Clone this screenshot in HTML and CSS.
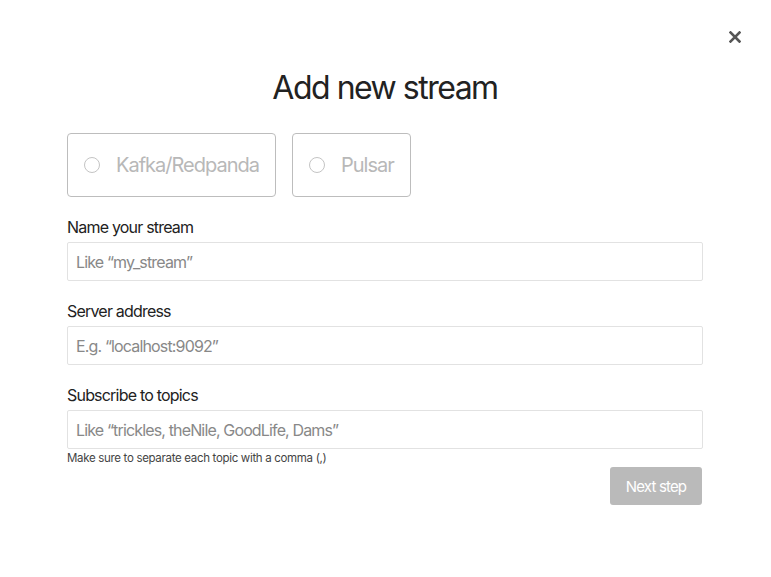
FILE: index.html
```html
<!DOCTYPE html>
<html>
<head>
<meta charset="utf-8">
<link rel="stylesheet" href="styles.css">
</head>
<body>
<div class="modal">
  <button class="close" aria-label="Close">
    <svg width="12" height="12" viewBox="0 0 12 12"><path d="M1.5 1.5 L10.5 10.5 M10.5 1.5 L1.5 10.5" stroke="#555" stroke-width="2.6" stroke-linecap="square"/></svg>
  </button>
  <h1 class="title">Add new stream</h1>
  <div class="types">
    <label class="type"><span class="radio"></span><span class="type-name">Kafka/Redpanda</span></label>
    <label class="type"><span class="radio"></span><span class="type-name">Pulsar</span></label>
  </div>
  <div class="field">
    <div class="label">Name your stream</div>
    <div class="input">Like “my_stream”</div>
  </div>
  <div class="field">
    <div class="label">Server address</div>
    <div class="input">E.g. “localhost:9092”</div>
  </div>
  <div class="field">
    <div class="label">Subscribe to topics</div>
    <div class="input">Like “trickles, theNile, GoodLife, Dams”</div>
    <div class="help">Make sure to separate each topic with a comma (,)</div>
  </div>
  <div class="actions">
    <button class="next">Next step</button>
  </div>
</div>
</body>
</html>
```
FILE: styles.css
```css
html, body {
  margin: 0;
  padding: 0;
  background: #fff;
  font-family: Inter, "Noto Sans", sans-serif;
  color: #222;
}
.modal {
  position: relative;
  width: 636px;
  padding: 66px 68px 0 67px;
}
.close {
  position: absolute;
  top: 31px;
  right: 30px;
  width: 12px;
  height: 12px;
  padding: 0;
  border: 0;
  background: none;
  display: flex;
}
.title {
  margin: 0;
  text-align: center;
  font-size: 32px;
  font-weight: 400;
  line-height: 44px;
  color: #222;
  letter-spacing: -1.5px;
}
.types {
  display: flex;
  gap: 16px;
  margin-top: 23px;
}
.type {
  display: flex;
  align-items: center;
  height: 62px;
  padding: 0 16px 0 16px;
  border: 1px solid #bdbdbd;
  border-radius: 4px;
}
.radio {
  width: 14px;
  height: 14px;
  border: 1px solid #c4c4c4;
  border-radius: 50%;
  margin-right: 16px;
}
.type-name {
  font-size: 20px;
  color: #b8b8b8;
  letter-spacing: -1px;
}
.types + .field { margin-top: 20px; }
.field {
  margin-top: 20px;
}
.label {
  font-size: 16px;
  line-height: 20px;
  color: #222;
  letter-spacing: -0.8px;
  margin-bottom: 5px;
}
.input {
  height: 37px;
  border: 1px solid #e2e2e2;
  border-radius: 2px;
  padding: 0 8px;
  display: flex;
  align-items: center;
  font-size: 16px;
  color: #888;
  letter-spacing: -0.85px;
}
.help {
  font-size: 11.5px;
  line-height: 16px;
  color: #444;
  margin-top: 1px;
  letter-spacing: -0.32px;
}
.actions {
  display: flex;
  justify-content: flex-end;
  margin-top: 1px;
  padding-right: 1px;
}
.next {
  width: 92px;
  height: 38px;
  border: 0;
  border-radius: 3px;
  background: #bababa;
  color: #fff;
  font-family: Inter, sans-serif;
  font-size: 15px;
  letter-spacing: -0.85px;
}
```
